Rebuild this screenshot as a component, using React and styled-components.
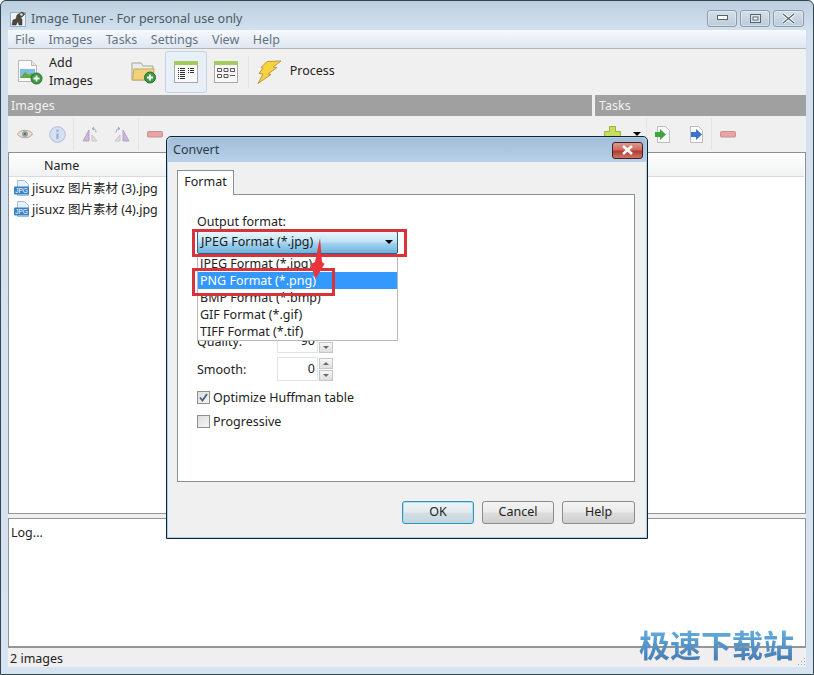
import React from 'react';
import styled, { createGlobalStyle } from 'styled-components';

const GlobalStyle = createGlobalStyle`
  html, body { margin: 0; padding: 0; background: #fff; overflow: hidden; }
  * { box-sizing: border-box; }
`;

const FONT = `"Noto Sans", "Noto Sans CJK SC", sans-serif`;

const Page = styled.div`
  position: relative;
  width: 814px;
  height: 675px;
  display: flex;
  flex-direction: column;
  padding: 0 7px 7px;
  border: 1px solid #33444f;
  border-radius: 6px 6px 0 0;
  background: linear-gradient(180deg, #bccfdf 0, #d3e1ee 30px, #d6e3f0 100%);
  font-family: ${FONT};
  font-size: 12.5px;
  color: #222;
`;

const TitleBar = styled.div`
  height: 29px;
  flex: none;
  display: flex;
  align-items: center;
  margin-left: 2px;
  gap: 4px;
  color: #4c5a65;
  padding-top: 5px;
`;

const TitleText = styled.span`
  flex: 1;
`;

const WinButtons = styled.div`
  display: flex;
  gap: 3px;
  margin-right: 2px;
`;

const WinButton = styled.div`
  width: ${({ $w }) => $w}px;
  height: 17px;
  display: flex;
  align-items: center;
  justify-content: center;
  border: 1px solid #8c9cab;
  border-radius: 3px;
  background: linear-gradient(180deg, #d4e0ea, #bccbd9);
  box-shadow: inset 0 0 0 1px rgba(255, 255, 255, 0.35);
`;

const MenuBar = styled.div`
  height: 19px;
  flex: none;
  display: flex;
  align-items: center;
  padding-left: 7px;
  gap: 13.5px;
  color: #66737f;
  background: linear-gradient(180deg, #f6fafd, #dfe7f3);
  border-bottom: 1px solid #b4b6bd;
`;

const Toolbar = styled.div`
  height: 46px;
  flex: none;
  display: flex;
  align-items: center;
  background: #f0f0f0;
  padding-left: 9px;
`;

const ToolLabel = styled.div`
  line-height: 18px;
  margin-left: ${({ $ml }) => $ml || 0}px;
  margin-bottom: ${({ $mb }) => $mb || 0}px;
  color: #222;
`;

const ToolSlot = styled.div`
  flex: none;
  width: ${({ $w }) => $w}px;
  margin-left: ${({ $ml }) => $ml || 0}px;
  height: ${({ $active }) => ($active ? 42 : 30)}px;
  display: flex;
  align-items: center;
  justify-content: center;
  border-radius: 3px;
  ${({ $active }) =>
    $active &&
    `
    border: 1px solid #c3d3e3;
    background: #e8eff6;
  `}
`;

const ToolSep = styled.div`
  flex: none;
  width: 1px;
  height: ${({ $h }) => $h || 32}px;
  margin-left: ${({ $ml }) => $ml || 0}px;
  background: #e4e4e4;
`;

const HeadRow = styled.div`
  height: 21px;
  flex: none;
  display: flex;
  gap: 3px;
  background: #f0f0f0;
`;

const HeadCell = styled.div`
  background: #a0a0a0;
  color: #f2f2f2;
  line-height: 21px;
  padding-left: ${({ $pl }) => $pl}px;
  width: ${({ $w }) => $w}px;
`;

const SubToolbar = styled(Toolbar)`
  height: 36px;
  padding-left: 9px;
`;

const ListPane = styled.div`
  height: 362px;
  flex: none;
  background: #fff;
  border: 1px solid #8d9094;
  border-bottom-color: #949494;
`;

const ListHead = styled.div`
  height: 24px;
  margin: 0 1px 0 0;
  padding-left: 35px;
  line-height: 25px;
  color: #222;
  background: linear-gradient(180deg, #ffffff, #f1f2f3);
  border-bottom: 1px solid #d9dadc;
`;

const ListBody = styled.div`
  padding: 0 0 0 5px;
`;

const FileRow = styled.div`
  height: 21px;
  display: flex;
  align-items: center;
  gap: 2px;
  color: #222;
`;

const Splitter = styled.div`
  height: 4px;
  flex: none;
  background: #f0f0f0;
`;

const LogPane = styled.div`
  height: 130px;
  flex: none;
  background: #fff;
  border: 1px solid #959595;
  border-bottom: 2px solid #959595;
  padding: 5px 2px;
  color: #222;
`;

const StatusBar = styled.div`
  height: 19px;
  flex: none;
  background: #f0eeee;
  line-height: 21px;
  padding-left: 2px;
  color: #222;
`;

/* dialog floats over the main window */
const Dialog = styled.div`
  position: absolute;
  left: 165px;
  top: 135px;
  width: 482px;
  height: 403px;
  display: flex;
  flex-direction: column;
  background: #f0f0f0;
  border: 1px solid #10202c;
  border-radius: 5px 5px 0 0;
  box-shadow: inset 0 0 0 1px #a9d2ea;
`;

const DialogTitle = styled.div`
  height: 24px;
  flex: none;
  margin: 1px 1px 0;
  display: flex;
  align-items: center;
  justify-content: space-between;
  padding: 0 3px 2px 5px;
  border-radius: 4px 4px 0 0;
  background: linear-gradient(180deg, #a3bcd8, #b9d2ea);
  color: #2c3a44;
`;

const CloseButton = styled.div`
  width: 31px;
  height: 17px;
  margin-top: 2px;
  display: flex;
  align-items: center;
  justify-content: center;
  border: 1px solid #3b2326;
  border-radius: 3px;
  background: linear-gradient(180deg, #dc9a90 0, #d0695d 45%, #b73a2e 55%, #cf7468 100%);
`;

const DialogBody = styled.div`
  flex: 1;
  display: flex;
  flex-direction: column;
  padding: 8px 12px 14px 10px;
`;

const TabStrip = styled.div`
  display: flex;
  height: 25px;
  flex: none;
`;

const Tab = styled.div`
  width: 57px;
  height: 25px;
  line-height: 21px;
  text-align: center;
  background: #fff;
  border: 1px solid #8a8f94;
  border-bottom: none;
  position: relative;
  z-index: 1;
  color: #222;
`;

const TabPanel = styled.div`
  height: 288px;
  flex: none;
  margin-top: -1px;
  background: #fff;
  border: 1px solid #8a8f94;
  padding: 19px 20px 0 19px;
`;

const FieldLabel = styled.div`
  line-height: 16px;
  height: 16px;
  color: #222;
`;

const ComboWrap = styled.div`
  position: relative;
  width: 201px;
  margin-top: 1px;
  z-index: 3;
`;

const Combo = styled.div`
  height: 23px;
  display: flex;
  align-items: center;
  justify-content: space-between;
  padding: 0 4px 2px 3px;
  border: 1px solid #2c628b;
  border-radius: 2px;
  background: linear-gradient(180deg, #eaf6fd 0, #bfe3f6 45%, #a0d2ee 55%, #6fb2da 100%);
  color: #1a1a1a;
`;

const Caret = styled.div`
  width: 0;
  height: 0;
  border-left: 4px solid transparent;
  border-right: 4px solid transparent;
  border-top: 4px solid #000;
`;

const ComboMenu = styled.div`
  position: absolute;
  top: 23px;
  left: 0;
  width: 201px;
  height: 87px;
  padding-top: 1px;
  background: #fff;
  border: 1px solid #b9b9b9;
  border-top: none;
`;

const MenuItem = styled.div`
  height: 17px;
  line-height: 18px;
  padding-left: 2px;
  color: ${({ $selected }) => ($selected ? '#fff' : '#222')};
  background: ${({ $selected }) => ($selected ? '#3399ff' : 'transparent')};
`;

const SpinRow = styled.div`
  display: flex;
  align-items: center;
  height: 24px;
  margin-top: ${({ $mt }) => $mt || 0}px;
`;

const SpinLabel = styled.div`
  width: 80px;
  color: #222;
`;

const SpinInput = styled.div`
  width: 41px;
  height: 24px;
  padding-right: 2px;
  line-height: 22px;
  text-align: right;
  border: 1px solid #e1e4e8;
  color: #222;
`;

const SpinArrows = styled.div`
  display: flex;
  flex-direction: column;
  gap: 1px;
  margin-left: 1px;
`;

const SpinArrow = styled.div`
  width: 14px;
  height: 11px;
  display: flex;
  align-items: center;
  justify-content: center;
  border: 1px solid #c6c6c6;
  background: linear-gradient(180deg, #f7f7f7, #dedede);

  &::after {
    content: '';
    width: 0;
    height: 0;
    border-left: 3px solid transparent;
    border-right: 3px solid transparent;
    ${({ $up }) =>
      $up ? 'border-bottom: 3px solid #6b6b6b;' : 'border-top: 3px solid #6b6b6b;'}
  }
`;

const CheckRow = styled.div`
  display: flex;
  align-items: center;
  gap: 3px;
  height: 18px;
  margin-top: ${({ $mt }) => $mt}px;
  color: #222;
`;

const CheckBox = styled.div`
  width: 13px;
  height: 13px;
  display: flex;
  align-items: center;
  justify-content: center;
  border: 1px solid #8e8f8f;
  background: linear-gradient(135deg, #dcdcdc, #f6f6f6);
`;

const ButtonRow = styled.div`
  display: flex;
  justify-content: flex-end;
  gap: 8px;
  margin-top: 19px;
`;

const DlgButton = styled.div`
  width: ${({ $w }) => $w || 72}px;
  height: 23px;
  line-height: 20px;
  text-align: center;
  border-radius: 3px;
  color: #222;
  border: 1px solid ${({ $primary }) => ($primary ? '#3c8fb8' : '#8c8c8c')};
  background: linear-gradient(180deg, #f4f4f4 0, #ebebeb 45%, #dcdcdc 55%, #cfcfcf 100%);
  ${({ $primary }) =>
    $primary && 'box-shadow: inset 0 0 0 1px #a6e0f4; background: linear-gradient(180deg, #eef4f7 0, #e3ebef 45%, #d2dee4 55%, #c5d5dd 100%);'}
`;

/* red annotation drawn over the screenshot */
const RedBox = styled.div`
  position: absolute;
  left: ${({ $x }) => $x}px;
  top: ${({ $y }) => $y}px;
  width: ${({ $w }) => $w}px;
  height: ${({ $h }) => $h}px;
  border: 3px solid #d8323c;
  z-index: 5;
  pointer-events: none;
`;

const RedArrow = styled.svg`
  position: absolute;
  left: 308px;
  top: 237px;
  z-index: 6;
`;

const Watermark = styled.div`
  position: absolute;
  right: 19px;
  bottom: 12px;
  font-family: "Noto Sans CJK SC", sans-serif;
  font-weight: 700;
  font-size: 31px;
  line-height: 36px;
  color: transparent;
  background: linear-gradient(180deg, #62aede 10%, #4a7fb6 90%);
  -webkit-background-clip: text;
  background-clip: text;
  z-index: 7;
`;

const Grip = styled.svg`
  position: absolute;
  right: 7px;
  bottom: 8px;
`;

const AddBadge = ({ cx, cy }) => (
  <g>
    <circle cx={cx} cy={cy} r="5.5" fill="#3d9a42" stroke="#2a6f30" />
    <path d={`M${cx - 3} ${cy}h6M${cx} ${cy - 3}v6`} stroke="#fff" strokeWidth="1.8" />
  </g>
);

const AddImagesIcon = () => (
  <svg width="26" height="26" viewBox="0 0 26 26">
    <path d="M1.5 1.5h13l5 5v16h-18z" fill="#fafafa" stroke="#b8b8b8" />
    <path d="M14.5 1.5v5h5" fill="#e4e4e4" stroke="#b8b8b8" />
    <rect x="3" y="10" width="15" height="9" fill="#7ebde8" />
    <path d="M3 19l5-6 4 3 3-2 3 5z" fill="#62a83a" />
    <AddBadge cx="19.5" cy="19.5" />
  </svg>
);

const FolderAddIcon = () => (
  <svg width="26" height="24" viewBox="0 0 26 24">
    <path d="M1 3h9l2 3h10v14H1z" fill="#e9eef0" stroke="#a7a58f" />
    <path d="M1.5 20L3 9h20l-1 11z" fill="#f4d27c" stroke="#c9a557" />
    <AddBadge cx="19" cy="17.5" />
  </svg>
);

const ViewIcon = ({ grid }) => (
  <svg width="24" height="22" viewBox="0 0 24 22">
    <rect x="0.5" y="0.5" width="23" height="21" fill="#f8f8f8" stroke="#a9a9a9" />
    <rect x="0" y="0" width="24" height="4" fill="#a3cc5c" />
    {grid ? (
      <path
        d="M3.5 7.5h4v3h-4zM10 7.5h4v3h-4zM16.5 7.5h4v3h-4zM3.5 13.5h4v3h-4zM10 13.5h4v3h-4zM16 14.5h5"
        fill="none"
        stroke="#555"
      />
    ) : (
      <path
        d="M4 7.5h1M6 7.5h5M4 9.5h1M6 9.5h5M4 11.5h1M6 11.5h5M4 13.5h1M6 13.5h5M4 15.5h1M6 15.5h5M4 17.5h1M6 17.5h5M14 7.5h1M16 7.5h4M14 9.5h1M16 9.5h4M14 11.5h1M16 11.5h4"
        stroke="#333"
      />
    )}
  </svg>
);

const BoltIcon = () => (
  <svg width="25" height="24" viewBox="0 0 25 24">
    <path
      d="M10 1.5L24 1 16 7l4 .5L11 14l3 .5L1 23.5 6 14l-4-.5L6 8 4 7.5z"
      fill="#f4d53f"
      stroke="#c3963a"
    />
  </svg>
);

const EyeIcon = () => (
  <svg width="16" height="12" viewBox="0 0 16 12">
    <path d="M0.5 6C3 1 13 1 15.5 6 13 11 3 11 0.5 6z" fill="#e9dfd2" stroke="#c2a58d" />
    <circle cx="8" cy="6" r="3" fill="#8fa6b8" />
    <circle cx="8" cy="6" r="1.3" fill="#5e6b75" />
  </svg>
);

const InfoIcon = () => (
  <svg width="17" height="17" viewBox="0 0 17 17">
    <circle cx="8.5" cy="8.5" r="7.8" fill="#d6e0f2" stroke="#aebcdc" />
    <circle cx="8.5" cy="4.8" r="1.3" fill="#9dafd3" />
    <path d="M8.5 7.5v5.5" stroke="#9dafd3" strokeWidth="2.4" />
  </svg>
);

const MirrorIcon = ({ flip }) => (
  <svg width="16" height="15" viewBox="0 0 16 15" style={flip ? { transform: 'scaleX(-1)' } : undefined}>
    <path d="M7 3v11H1z" fill="#c9b8d8" stroke="#b3a2c4" />
    <path d="M10 8v6h5z" fill="#e2e2e2" stroke="#c4c4c4" />
    <path d="M10 1.5c3 0 4 1.5 4 4M10 1.5l2-1.2M10 1.5l2 1.5" fill="none" stroke="#9aa8b8" />
  </svg>
);

const MinusIcon = () => (
  <svg width="16" height="7" viewBox="0 0 16 7">
    <rect x="0.5" y="0.5" width="15" height="5.5" rx="1" fill="#e7a5a5" stroke="#c88f8f" />
  </svg>
);

const PlusIcon = () => (
  <svg width="17" height="17" viewBox="0 0 17 17">
    <path d="M5.5 0.5h6v5h5v6h-16v-6h5z" fill="#c9de5e" stroke="#9db640" />
  </svg>
);

const PageArrowIcon = ({ color, left }) => (
  <svg width="16" height="17" viewBox="0 0 16 17">
    <path d="M2.5 0.5h8l4 4v12h-12z" fill="#fbfbfb" stroke="#bcbcbc" />
    <path d={left ? 'M0 6h5V3l6 5.5-6 5.5v-3H0z' : 'M3 6h5V3l6 5.5-6 5.5v-3H3z'} fill={color} />
  </svg>
);

const JpgIcon = () => (
  <svg width="16" height="16" viewBox="0 0 16 16">
    <path d="M3.5 0.5h7l4 4v11h-11z" fill="#e8f2fb" stroke="#9cc0df" />
    <rect x="0" y="6.5" width="15" height="8" rx="1" fill="#3b82c4" />
    <text x="7.5" y="13" textAnchor="middle" fontSize="6.5" fontFamily="Liberation Sans" fill="#fff">
      JPG
    </text>
  </svg>
);

const AppIcon = () => (
  <svg width="17" height="17" viewBox="0 0 17 17">
    <rect x="0.5" y="2.5" width="15" height="14" fill="#eef3f7" stroke="#8fb0cc" />
    <path d="M2 15l1-5 3-1 1-4 5-3 3 2-3 3-2 1 2 1v6h-3l-1-4-2 4z" fill="#4a4a3c" stroke="#2b2b22" strokeWidth="0.5" />
    <circle cx="11.5" cy="4.5" r="1.3" fill="#e4e4d2" />
  </svg>
);

const files = ['jisuxz 图片素材 (3).jpg', 'jisuxz 图片素材 (4).jpg'];
const formats = ['JPEG Format (*.jpg)', 'PNG Format (*.png)', 'BMP Format (*.bmp)', 'GIF Format (*.gif)', 'TIFF Format (*.tif)'];
const menus = ['File', 'Images', 'Tasks', 'Settings', 'View', 'Help'];

export default function App() {
  return (
    <Page>
      <GlobalStyle />
      <TitleBar>
        <AppIcon />
        <TitleText>Image Tuner - For personal use only</TitleText>
        <WinButtons>
          <WinButton $w={30}>
            <svg width="11" height="6"><rect x="0.5" y="0.5" width="10" height="4" fill="#fff" stroke="#56646f" /></svg>
          </WinButton>
          <WinButton $w={30}>
            <svg width="11" height="9"><rect x="0.5" y="0.5" width="10" height="8" fill="#dce6ee" stroke="#56646f" /><rect x="3" y="3" width="5" height="3" fill="#fff" stroke="#56646f" /></svg>
          </WinButton>
          <WinButton $w={31}>
            <svg width="13" height="11"><path d="M1 1l11 9M12 1L1 10" stroke="#fff" strokeWidth="3" /><path d="M1 1l11 9M12 1L1 10" stroke="#56646f" strokeWidth="1.2" /></svg>
          </WinButton>
        </WinButtons>
      </TitleBar>

      <MenuBar>
        {menus.map((m) => (
          <span key={m}>{m}</span>
        ))}
      </MenuBar>

      <Toolbar>
        <AddImagesIcon />
        <ToolLabel $ml={6}>Add<br />Images</ToolLabel>
        <ToolSlot $w={28} $ml={37}><FolderAddIcon /></ToolSlot>
        <ToolSlot $w={42} $ml={7} $active><ViewIcon /></ToolSlot>
        <ToolSlot $w={26} $ml={6}><ViewIcon grid /></ToolSlot>
        <ToolSep $ml={9} />
        <ToolSlot $w={26} $ml={8}><BoltIcon /></ToolSlot>
        <ToolLabel $ml={7} $mb={2}>Process</ToolLabel>
      </Toolbar>

      <HeadRow>
        <HeadCell $w={584} $pl={3}>Images</HeadCell>
        <HeadCell $w={211} $pl={4}>Tasks</HeadCell>
      </HeadRow>

      <SubToolbar>
        <ToolSlot $w={16}><EyeIcon /></ToolSlot>
        <ToolSlot $w={17} $ml={16}><InfoIcon /></ToolSlot>
        <ToolSep $ml={7} />
        <ToolSlot $w={16} $ml={8}><MirrorIcon /></ToolSlot>
        <ToolSlot $w={16} $ml={16}><MirrorIcon flip /></ToolSlot>
        <ToolSep $ml={8} />
        <ToolSlot $w={16} $ml={8}><MinusIcon /></ToolSlot>
        <ToolSlot $w={17} $ml={441}><PlusIcon /></ToolSlot>
        <ToolSlot $w={16} $ml={8}><Caret /></ToolSlot>
        <ToolSep $ml={1} />
        <ToolSlot $w={16} $ml={8}><PageArrowIcon color="#3fa33f" left /></ToolSlot>
        <ToolSlot $w={16} $ml={17}><PageArrowIcon color="#3b73cf" /></ToolSlot>
        <ToolSep $ml={7} />
        <ToolSlot $w={16} $ml={8}><MinusIcon /></ToolSlot>
      </SubToolbar>

      <ListPane>
        <ListHead>Name</ListHead>
        <ListBody>
          {files.map((f) => (
            <FileRow key={f}>
              <JpgIcon />
              <span>{f}</span>
            </FileRow>
          ))}
        </ListBody>
      </ListPane>
      <Splitter />
      <LogPane>Log...</LogPane>
      <StatusBar>2 images</StatusBar>

      <Dialog>
        <DialogTitle>
          <span>Convert</span>
          <CloseButton>
            <svg width="13" height="10"><path d="M2 1l9 8M11 1L2 9" stroke="#fff" strokeWidth="2.6" /></svg>
          </CloseButton>
        </DialogTitle>
        <DialogBody>
          <TabStrip><Tab>Format</Tab></TabStrip>
          <TabPanel>
            <FieldLabel>Output format:</FieldLabel>
            <ComboWrap>
              <Combo>
                <span>JPEG Format (*.jpg)</span>
                <Caret />
              </Combo>
              <ComboMenu>
                {formats.map((f, i) => (
                  <MenuItem key={f} $selected={i === 1}>{f}</MenuItem>
                ))}
              </ComboMenu>
            </ComboWrap>
            <SpinRow $mt={75}>
              <SpinLabel>Quality:</SpinLabel>
              <SpinInput>90</SpinInput>
              <SpinArrows><SpinArrow $up /><SpinArrow /></SpinArrows>
            </SpinRow>
            <SpinRow $mt={4}>
              <SpinLabel>Smooth:</SpinLabel>
              <SpinInput>0</SpinInput>
              <SpinArrows><SpinArrow $up /><SpinArrow /></SpinArrows>
            </SpinRow>
            <CheckRow $mt={7}>
              <CheckBox>
                <svg width="11" height="11"><path d="M2 5.5l2.5 3L9 2" fill="none" stroke="#4a5f82" strokeWidth="1.8" /></svg>
              </CheckBox>
              Optimize Huffman table
            </CheckRow>
            <CheckRow $mt={6}>
              <CheckBox />
              Progressive
            </CheckRow>
          </TabPanel>
          <ButtonRow>
            <DlgButton $primary>OK</DlgButton>
            <DlgButton>Cancel</DlgButton>
            <DlgButton $w={73}>Help</DlgButton>
          </ButtonRow>
        </DialogBody>
      </Dialog>

      <RedBox $x={191} $y={228} $w={215} $h={28} />
      <RedBox $x={191} $y={267} $w={143} $h={28} />
      <RedArrow width="18" height="44" viewBox="0 0 18 44">
        <path d="M11 0L13 24l2.5 2-9 15-5-15L6 24z" fill="#e8343c" />
      </RedArrow>

      <Watermark>极速下载站</Watermark>
      <Grip width="9" height="9">
        <path d="M7 1h1v1H7zM7 4h1v1H7zM4 4h1v1H4zM7 7h1v1H7zM4 7h1v1H4zM1 7h1v1H1z" fill="#9aa6b0" />
      </Grip>
    </Page>
  );
}
